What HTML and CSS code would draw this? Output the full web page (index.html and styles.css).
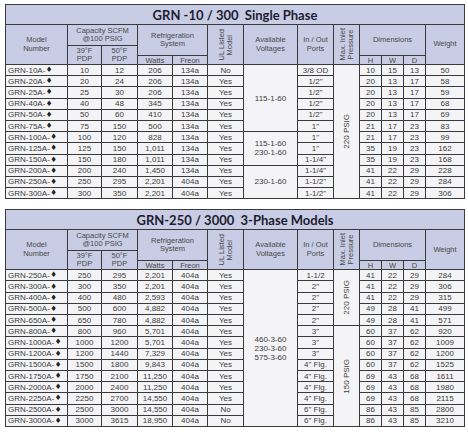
FILE: index.html
```html
<!DOCTYPE html>
<html>
<head>
<meta charset="utf-8">
<link rel="stylesheet" href="styles.css">
</head>
<body>
<div class="page">
<div class="spec rows12">
<div class="title">GRN -10 / 300&nbsp; Single Phase</div>
<div class="hd r3">Model<br>Number</div>
<div class="hd c2">Capacity SCFM<br>@100 PSIG</div>
<div class="hd c2 r2">Refrigeration<br>System</div>
<div class="hd r3"><span class="vt">UL Listed<br>Model</span></div>
<div class="hd r3">Available<br>Voltages</div>
<div class="hd r3">In / Out<br>Ports</div>
<div class="hd r3"><span class="vt">Max. Inlet<br>Pressure</span></div>
<div class="hd c3 r2">Dimensions</div>
<div class="hd r3">Weight</div>
<div class="hd r2">39°F<br>PDP</div>
<div class="hd r2">50°F<br>PDP</div>
<div class="hd sm">Watts</div><div class="hd sm">Freon</div><div class="hd sm">H</div><div class="hd sm">W</div><div class="hd sm">D</div>

<div class="m">GRN-10A-<span class="dia">♦</span></div><div>10</div><div>12</div><div>206</div><div>134a</div><div>No</div><div class="r6">115-1-60</div><div>3/8 OD</div><div class="r12"><span class="vt">220 PSIG</span></div><div>10</div><div>15</div><div>13</div><div>50</div>
<div class="m">GRN-20A-<span class="dia">♦</span></div><div>20</div><div>24</div><div>206</div><div>134a</div><div>Yes</div><div>1/2"</div><div>20</div><div>13</div><div>17</div><div>58</div>
<div class="m">GRN-25A-<span class="dia">♦</span></div><div>25</div><div>30</div><div>206</div><div>134a</div><div>Yes</div><div>1/2"</div><div>20</div><div>13</div><div>17</div><div>59</div>
<div class="m">GRN-40A-<span class="dia">♦</span></div><div>40</div><div>48</div><div>345</div><div>134a</div><div>Yes</div><div>1/2"</div><div>20</div><div>13</div><div>17</div><div>68</div>
<div class="m">GRN-50A-<span class="dia">♦</span></div><div>50</div><div>60</div><div>410</div><div>134a</div><div>Yes</div><div>1/2"</div><div>20</div><div>13</div><div>17</div><div>69</div>
<div class="m">GRN-75A-<span class="dia">♦</span></div><div>75</div><div>150</div><div>500</div><div>134a</div><div>Yes</div><div>1"</div><div>21</div><div>17</div><div>23</div><div>83</div>
<div class="m">GRN-100A-<span class="dia">♦</span></div><div>100</div><div>120</div><div>828</div><div>134a</div><div>Yes</div><div class="r3">115-1-60<br>230-1-60</div><div>1"</div><div>21</div><div>17</div><div>23</div><div>99</div>
<div class="m">GRN-125A-<span class="dia">♦</span></div><div>125</div><div>150</div><div>1,011</div><div>134a</div><div>Yes</div><div>1"</div><div>35</div><div>19</div><div>23</div><div>162</div>
<div class="m">GRN-150A-<span class="dia">♦</span></div><div>150</div><div>180</div><div>1,011</div><div>134a</div><div>Yes</div><div>1-1/4"</div><div>35</div><div>19</div><div>23</div><div>168</div>
<div class="m">GRN-200A-<span class="dia">♦</span></div><div>200</div><div>240</div><div>1,450</div><div>134a</div><div>Yes</div><div class="r3">230-1-60</div><div>1-1/4"</div><div>41</div><div>22</div><div>29</div><div>228</div>
<div class="m">GRN-250A-<span class="dia">♦</span></div><div>250</div><div>295</div><div>2,201</div><div>404a</div><div>Yes</div><div>1-1/2"</div><div>41</div><div>22</div><div>29</div><div>284</div>
<div class="m">GRN-300A-<span class="dia">♦</span></div><div>300</div><div>350</div><div>2,201</div><div>404a</div><div>Yes</div><div>1-1/2"</div><div>41</div><div>22</div><div>29</div><div>306</div>
</div>

<div class="spec rows14">
<div class="title">GRN-250 / 3000&nbsp; 3-Phase Models</div>
<div class="hd r3">Model<br>Number</div>
<div class="hd c2">Capacity SCFM<br>@100 PSIG</div>
<div class="hd c2 r2">Refrigeration<br>System</div>
<div class="hd r3"><span class="vt">UL Listed<br>Model</span></div>
<div class="hd r3">Available<br>Voltages</div>
<div class="hd r3">In / Out<br>Ports</div>
<div class="hd r3"><span class="vt">Max. Inlet<br>Pressure</span></div>
<div class="hd c3 r2">Dimensions</div>
<div class="hd r3">Weight</div>
<div class="hd r2">39°F<br>PDP</div>
<div class="hd r2">50°F<br>PDP</div>
<div class="hd sm">Watts</div><div class="hd sm">Freon</div><div class="hd sm">H</div><div class="hd sm">W</div><div class="hd sm">D</div>

<div class="m">GRN-250A-<span class="dia">♦</span></div><div>250</div><div>295</div><div>2,201</div><div>404a</div><div>Yes</div><div class="r14">460-3-60<br>230-3-60<br>575-3-60</div><div>1-1/2</div><div class="r5"><span class="vt">220 PSIG</span></div><div>41</div><div>22</div><div>29</div><div>284</div>
<div class="m">GRN-300A-<span class="dia">♦</span></div><div>300</div><div>350</div><div>2,201</div><div>404a</div><div>Yes</div><div>2"</div><div>41</div><div>22</div><div>29</div><div>306</div>
<div class="m">GRN-400A-<span class="dia">♦</span></div><div>400</div><div>480</div><div>2,593</div><div>404a</div><div>Yes</div><div>2"</div><div>41</div><div>22</div><div>29</div><div>315</div>
<div class="m">GRN-500A-<span class="dia">♦</span></div><div>500</div><div>600</div><div>4,882</div><div>404a</div><div>Yes</div><div>2"</div><div>49</div><div>28</div><div>41</div><div>499</div>
<div class="m">GRN-650A-<span class="dia">♦</span></div><div>650</div><div>780</div><div>4,882</div><div>404a</div><div>Yes</div><div>2"</div><div>49</div><div>28</div><div>41</div><div>571</div>
<div class="m">GRN-800A-<span class="dia">♦</span></div><div>800</div><div>960</div><div>5,701</div><div>404a</div><div>Yes</div><div>3"</div><div class="r9"><span class="vt">150 PSIG</span></div><div>60</div><div>37</div><div>62</div><div>920</div>
<div class="m">GRN-1000A-<span class="dia">♦</span></div><div>1000</div><div>1200</div><div>5,701</div><div>404a</div><div>Yes</div><div>3"</div><div>60</div><div>37</div><div>62</div><div>1009</div>
<div class="m">GRN-1200A-<span class="dia">♦</span></div><div>1200</div><div>1440</div><div>7,329</div><div>404a</div><div>Yes</div><div>3"</div><div>60</div><div>37</div><div>62</div><div>1200</div>
<div class="m">GRN-1500A-<span class="dia">♦</span></div><div>1500</div><div>1800</div><div>9,843</div><div>404a</div><div>Yes</div><div>4" Flg.</div><div>60</div><div>37</div><div>62</div><div>1525</div>
<div class="m">GRN-1750A-<span class="dia">♦</span></div><div>1750</div><div>2100</div><div>11,250</div><div>404a</div><div>Yes</div><div>4" Flg.</div><div>69</div><div>43</div><div>68</div><div>1611</div>
<div class="m">GRN-2000A-<span class="dia">♦</span></div><div>2000</div><div>2400</div><div>11,250</div><div>404a</div><div>Yes</div><div>4" Flg.</div><div>69</div><div>43</div><div>68</div><div>1980</div>
<div class="m">GRN-2250A-<span class="dia">♦</span></div><div>2250</div><div>2700</div><div>14,550</div><div>404a</div><div>Yes</div><div>4" Flg.</div><div>69</div><div>43</div><div>68</div><div>2115</div>
<div class="m">GRN-2500A-<span class="dia">♦</span></div><div>2500</div><div>3000</div><div>14,550</div><div>404a</div><div>No</div><div>6" Flg.</div><div>86</div><div>43</div><div>85</div><div>2800</div>
<div class="m">GRN-3000A-<span class="dia">♦</span></div><div>3000</div><div>3615</div><div>18,950</div><div>404a</div><div>No</div><div>6" Flg.</div><div>86</div><div>43</div><div>85</div><div>3210</div>
</div>
</div>
</body>
</html>
```

FILE: styles.css
```css
* { box-sizing: border-box; }
body {
  margin: 0;
  background: #ffffff;
  font-family: "Liberation Sans", Arial, sans-serif;
}
.page {
  padding: 4px 3px 0 5px;
  display: flex;
  flex-direction: column;
  align-items: flex-start;
  gap: 10px;
}
.spec {
  width: 460px;
  display: grid;
  grid-template-columns: 61px 33px 35px 34px 34px 35px 53px 35px 25px 21px 21px 21px 38px;
  gap: 1px;
  padding: 1px;
  background: #3a3a3a;
  color: #3c3c3c;
  font-size: 8px;
  line-height: 9px;
}
.rows12 { grid-template-rows: 19px 20px 9px 8px repeat(12, 10.2px); }
.rows14 { grid-template-rows: 19px 20px 9px 8px repeat(14, 10.2px); }

.spec > div {
  background: #f4f4f6;
  display: flex;
  align-items: center;
  justify-content: center;
  text-align: center;
  white-space: nowrap;
  overflow: hidden;
}
.spec > .title {
  grid-column: 1 / -1;
  background: #c8cce4;
  font-family: "Lato", sans-serif;
  font-weight: 700;
  font-size: 13px;
  line-height: 17px;
  color: #1d1d30;
  padding-top: 1px;
}
.spec > .hd {
  background: #c8cce4;
  color: #4a4a4a;
  font-size: 7.5px;
  line-height: 8.5px;
}
.spec > .sm { line-height: 7px; }
.c2 { grid-column: span 2; }
.c3 { grid-column: span 3; }
.r2 { grid-row: span 2; }
.r3 { grid-row: span 3; }
.r5 { grid-row: span 5; }
.r6 { grid-row: span 6; }
.r9 { grid-row: span 9; }
.r12 { grid-row: span 12; }
.r14 { grid-row: span 14; }

.spec > .m {
  justify-content: flex-start;
  padding-left: 2px;
}
.dia {
  font-family: "DejaVu Sans", sans-serif;
  font-size: 7.5px;
  line-height: 0;
  margin-left: 0.5px;
  vertical-align: -1px;
  color: #222;
}
.vt {
  display: inline-block;
  writing-mode: vertical-rl;
  transform: rotate(180deg);
  line-height: 8px;
}
```
